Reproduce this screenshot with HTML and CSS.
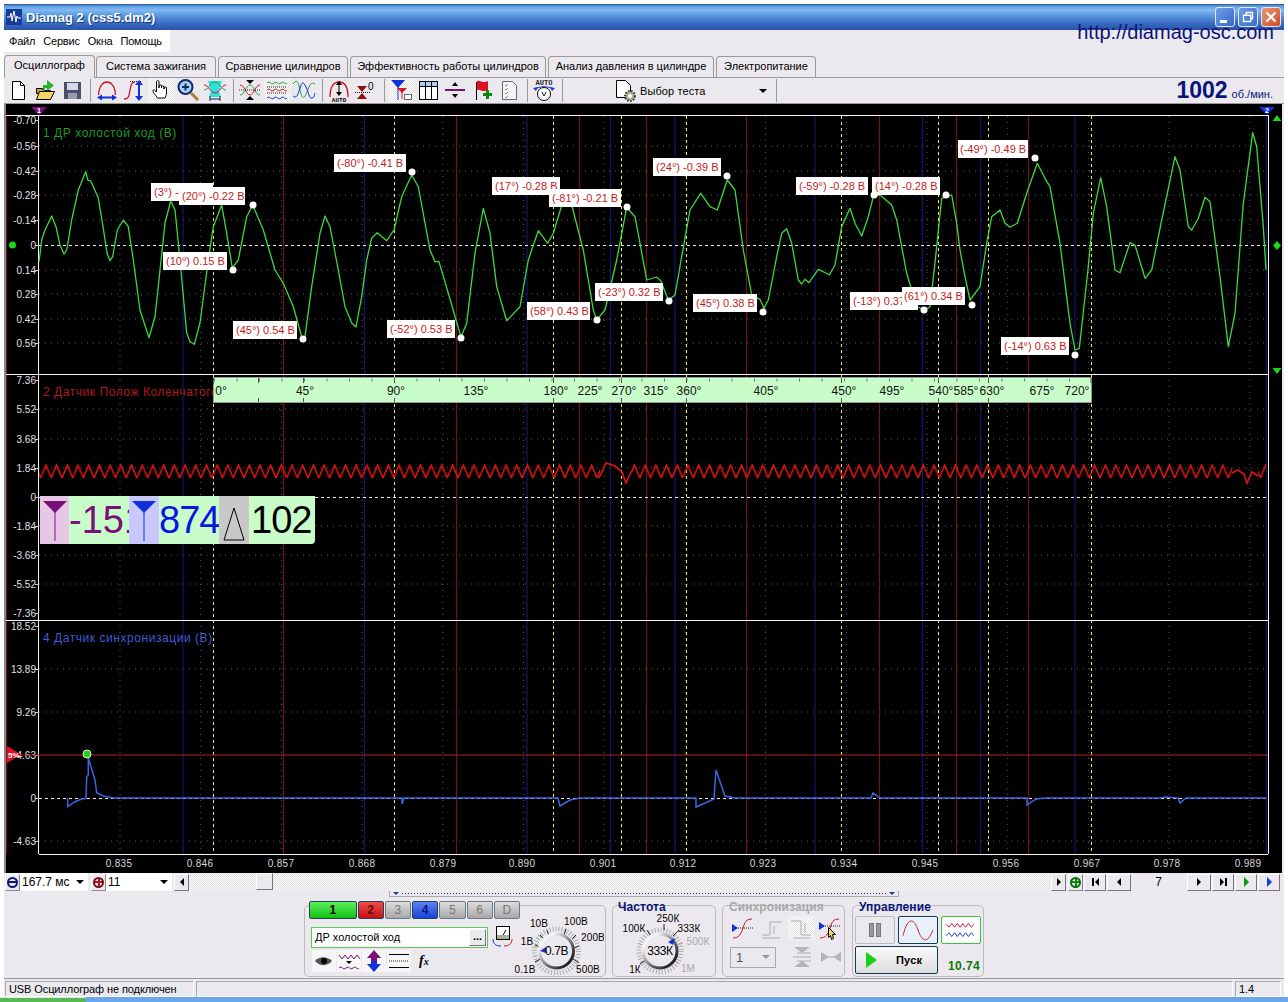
FILE: index.html
```html
<!DOCTYPE html>
<html lang="ru">
<head>
    <meta charset="UTF-8">
    <title>Diamag 2 (css5.dm2)</title>
    <link rel="stylesheet" href="styles.css">
</head>
<body>
<div class="window">
    <div class="titlebar">
        <svg class="app-icon" viewBox="0 0 16 16"><rect width="16" height="16" class="f-navy"/><path class="s-white" d="M1 8h3l1-4 1 8 2-10 2 11 1-6 1 2h3"/></svg>
        <span class="title">Diamag 2 (css5.dm2)</span>
        <div class="win-buttons">
            <span class="win-btn"><i class="win-min"></i></span>
            <span class="win-btn"><svg viewBox="0 0 20 20"><path class="s-white2" d="M5 8h8v7H5zM8 8V5h7v7h-2"/></svg></span>
            <span class="win-btn win-close"><svg viewBox="0 0 20 20"><path class="s-white3" d="M5 5l10 10M15 5L5 15"/></svg></span>
        </div>
    </div>
    <a class="site-link">http://diamag-osc.com</a>

    <div class="menubar">
        <span>Файл</span><span>Сервис</span><span>Окна</span><span>Помощь</span>
    </div>

    <div class="tabs">
        <div class="tab active">Осциллограф</div>
        <div class="tab w120">Система зажигания</div>
        <div class="tab w130">Сравнение цилиндров</div>
        <div class="tab w196">Эффективность работы цилиндров</div>
        <div class="tab w166">Анализ давления в цилиндре</div>
        <div class="tab w100">Электропитание</div>
    </div>

    <div class="toolbar">
        <span class="tb"><svg viewBox="0 0 24 24"><path class="f-white s-black" d="M6.500 3.500h8l4 4v14h-12z"/><path class="s-black" d="M14.500 3.500v4h4"/></svg></span>
        <span class="tb"><svg viewBox="0 0 24 24"><path class="f-tan s-black" d="M3.500 10.500h6l1 2h7v3h-14z"/><path class="f-yellow s-black" d="M3.500 21.500l3-8h15l-4 8z"/><path class="f-green" d="M14 2l7 5.500-7 5.500v-3h-2v3h-2V7h4z"/></svg></span>
        <span class="tb"><svg viewBox="0 0 24 24"><path class="f-slate" d="M4 4h17v17H4z"/><path class="f-pale" d="M7 5h11v7H7z"/><path class="f-grey" d="M8 15h9v6H8z"/></svg></span>
        <span class="tb-sep"></span>
        <span class="tb"><svg viewBox="0 0 24 24"><path class="s-red" d="M3.500 17C4 8 8 4 12 4s8 4 8.500 13"/><path class="s-blue2" d="M5 19.500h14"/><path class="f-blue" d="M2 19.500l5-3v6zM22 19.500l-5-3v6z"/></svg></span>
        <span class="tb"><svg viewBox="0 0 24 24"><path class="s-dots" d="M8 3.500h11"/><path class="s-red" d="M2 21c5 0 5-3 6-9s2-8 5-8"/><path class="s-blue2" d="M17 6v14"/><path class="f-blue" d="M17 2l-4 5h8zM17 23l-4-5h8z"/></svg></span>
        <span class="tb pressed"><svg viewBox="0 0 24 24"><path class="f-white s-black" d="M8.500 20c-2-3-5-6-4.500-7.500s2-.5 3.500 1.500V4c0-2 2.500-2 2.500 0v6-2c0-1.500 2.500-1.500 2.500 0v2-1c0-1.500 2.500-1.500 2.500 0v2-1c0-1.500 2.500-1.500 2.500 0v5c0 2-1 3.500-1.500 5z"/></svg></span>
        <span class="tb"><svg viewBox="0 0 24 24"><path class="s-tan3" d="M15 15l7 7"/><circle class="f-sky s-navy2" cx="9.500" cy="9" r="7"/><path class="s-navy2" d="M6 9h7M9.500 5.500v7"/></svg></span>
        <span class="tb"><svg viewBox="0 0 24 24"><path class="f-cyan" d="M5 3h14l-3 10 2 6H6l2-6z"/><path class="s-red1" d="M1 7c5 0 6 8 11 8s6-8 11-8"/><path class="s-green1" d="M1 12c5 0 6-8 11-8s6 8 11 8"/><path class="s-navy1" d="M7 21h10M7 18v5M17 18v5"/></svg></span>
        <span class="tb-sep"></span>
        <span class="tb"><svg viewBox="0 0 24 24"><path class="s-green1" d="M2 17c5 0 6-10 10-10s5 10 10 10"/><path class="s-red1" d="M2 7c5 0 6 10 10 10s5-10 10-10"/><path class="s-dots" d="M1 12h22"/><path class="f-black" d="M12 6L8 2h8zM12 18l-4 4h8z"/></svg></span>
        <span class="tb pressed"><svg viewBox="0 0 24 24"><path class="s-green1" d="M2 5c3-3 4 3 7 0s4 3 7 0 4 3 6 0"/><path class="s-dots" d="M2 9h20M2 15h20"/><path class="s-red1" d="M2 12c3-3 4 3 7 0s4 3 7 0 4 3 6 0"/><path class="s-blue1" d="M2 20c3-3 4 3 7 0s4 3 7 0 4 3 6 0"/></svg></span>
        <span class="tb"><svg viewBox="0 0 24 24"><path class="s-green1" d="M1 6c4-5 5-3 7 6s4 10 7 2 4-10 8-8"/><path class="s-blue1" d="M1 18c4 3 5-2 7-8s3-7 6-1 3 12 6 11 2-3 3-5"/></svg></span>
        <span class="tb-sep"></span>
        <span class="tb"><svg viewBox="0 0 24 24"><path class="s-red" d="M3 19C3 8 7 4 12 4s9 4 9 15"/><path class="s-black" d="M12 7v9"/><path class="f-black" d="M12 3L9 7h6zM12 18l-3-4h6z"/><text class="t-auto" x="12" y="23.500">AUTO</text></svg></span>
        <span class="tb"><svg viewBox="0 0 24 24"><path class="f-darkred" d="M3 8h10l-5 6zM3 21h10l-5-6z"/><path class="s-dots" d="M1 14.500h15"/><text class="t-zero" x="14" y="12">0</text></svg></span>
        <span class="tb-sep"></span>
        <span class="tb pressed"><svg viewBox="0 0 24 24"><path class="f-blue" d="M2 2h14l-7 8z"/><path class="s-blue1" d="M9 8v14"/><path class="f-red" d="M8 10h10l-5 5z"/><path class="s-red1" d="M13 14v7"/><rect class="f-white s-slate" x="15.500" y="16.500" width="7" height="5"/></svg></span>
        <span class="tb"><svg viewBox="0 0 24 24"><rect class="f-white s-black" x="3.500" y="3.500" width="18" height="18"/><path class="f-sky" d="M4 4h17v4H4z"/><path class="s-black" d="M3.500 8.500h18M9.500 3.500v18M15.500 3.500v18"/></svg></span>
        <span class="tb"><svg viewBox="0 0 24 24"><path class="s-purple" d="M2 12h20"/><path class="f-black" d="M12 4L9 8h6zM12 20l-3-4h6z"/></svg></span>
        <span class="tb"><svg viewBox="0 0 24 24"><path class="s-black" d="M6.500 4v18"/><path class="f-red" d="M7 3c3-1 4 1 6 1s3 0 5-1v9c-2 1-3 1-5 1s-3-2-6-1z"/><path class="f-darkgreen" d="M13 15h3v-3h3v3h3v3h-3v3h-3v-3h-3z"/></svg></span>
        <span class="tb"><svg viewBox="0 0 24 24"><path class="f-offwhite s-slate" d="M5.500 3.500h10l4 4v14h-14z"/><path class="s-check" d="M8 7l1 1 2-2M8 11l1 1 2-2M8 15l1 1 2-2M8 19l1 1 2-2"/></svg></span>
        <span class="tb-sep"></span>
        <span class="tb"><svg viewBox="0 0 24 24"><text class="t-autoclock" x="12" y="7">AUTO</text><path class="s-blue1" d="M3 11c5-3 13-3 18 0"/><path class="f-blue" d="M1 10l5-1-2 4zM23 10l-5-1 2 4z"/><circle class="f-white s-black" cx="12" cy="16" r="6.500"/><path class="s-navy1" d="M10 14l2 4 2-4"/></svg></span>
        <span class="tb-sep"></span>
        <div class="test-select">
            <svg viewBox="0 0 24 24"><path class="f-white s-black" d="M2.500 1.500h9l5 5v12h-14z"/><circle class="gear" cx="16" cy="17" r="5"/><circle class="f-white" cx="16" cy="17" r="2"/></svg>
            <span>Выбор теста</span>
            <i class="caret"></i>
        </div>
        <span class="tb-sep"></span>
        <div class="rpm"><b>1002</b> об./мин.</div>
    </div>

    <div class="scope">
        <svg class="plot" viewBox="6 104 1276 769">
            <!-- grid -->
            <path class="grid" d="M39 146H1268M39 171H1268M39 195H1268M39 220H1268M39 270H1268M39 294H1268M39 319H1268M39 343H1268M39 409H1268M39 439H1268M39 468H1268M39 526H1268M39 555H1268M39 584H1268M39 669H1268M39 712H1268M39 841H1268"/>
            <path class="grid" d="M120 116V854M200.700 116V854M281.400 116V854M362.100 116V854M442.800 116V854M523.500 116V854M604.200 116V854M684.900 116V854M765.600 116V854M846.300 116V854M927 116V854M1007.700 116V854M1088.400 116V854M1169.100 116V854M1249.800 116V854"/>
            <path class="mark-blue" d="M183 116V854M364.500 116V854M527 116V854M610.500 116V854M675 116V854M815 116V854M922.500 116V854M980.500 116V854M1075 116V854M1266.500 116V854"/>
            <path class="mark-red" d="M6.500 116V854M283.500 116V854M456.500 116V854M579.500 116V854M646.500 116V854M746.500 116V854M879.500 116V854M956.500 116V854M1028.500 116V854"/>
            <path class="mark-yellow" d="M213.500 116V854M394.500 116V854M553.500 116V854M621.500 116V854M686.500 116V854M841.500 116V854M938.500 116V854M988.500 116V854M1091.500 116V854"/>
            <path class="zero" d="M39 245.500H1268M39 497.500H1268M39 798.500H1268"/>

            <!-- axes -->
            <path class="axis" d="M6 115.500H1268M6 374.500H1268M6 620.500H1268M39 854.500H1268M38.500 115V854M1268.500 115V854"/>
            <path class="axis-tick" d="M35 120.500h4M35 146.500h4M35 171.500h4M35 195.500h4M35 220.500h4M35 245.500h4M35 270.500h4M35 294.500h4M35 319.500h4M35 343.500h4M35 380.500h4M35 409.500h4M35 439.500h4M35 468.500h4M35 497.500h4M35 526.500h4M35 555.500h4M35 584.500h4M35 613.500h4M35 626.500h4M35 669.500h4M35 712.500h4M35 755.500h4M35 798.500h4M35 841.500h4"/>
            <g class="y-labels">
                <text x="36" y="124">-0.70</text><text x="36" y="150">-0.56</text><text x="36" y="175">-0.42</text><text x="36" y="199">-0.28</text><text x="36" y="224">-0.14</text><text x="36" y="249">0</text><text x="36" y="274">0.14</text><text x="36" y="298">0.28</text><text x="36" y="323">0.42</text><text x="36" y="347">0.56</text>
                <text x="36" y="384">7.36</text><text x="36" y="413">5.52</text><text x="36" y="443">3.68</text><text x="36" y="472">1.84</text><text x="36" y="501">0</text><text x="36" y="530">-1.84</text><text x="36" y="559">-3.68</text><text x="36" y="588">-5.52</text><text x="36" y="617">-7.36</text>
                <text x="36" y="630">18.52</text><text x="36" y="673">13.89</text><text x="36" y="716">9.26</text><text x="36" y="759">4.63</text><text x="36" y="802">0</text><text x="36" y="845">-4.63</text>
            </g>
            <g class="x-labels">
                <text x="119" y="867">0.835</text><text x="200" y="867">0.846</text><text x="281" y="867">0.857</text><text x="362" y="867">0.868</text><text x="443" y="867">0.879</text><text x="522" y="867">0.890</text><text x="603" y="867">0.901</text><text x="683" y="867">0.912</text><text x="763" y="867">0.923</text><text x="844" y="867">0.934</text><text x="925" y="867">0.945</text><text x="1006" y="867">0.956</text><text x="1087" y="867">0.967</text><text x="1167" y="867">0.978</text><text x="1248" y="867">0.989</text>
            </g>

            <!-- channel 1 -->
            <text class="ch-title ch1" x="43" y="137">1 ДР холостой ход (В)</text>
            <path class="wave-green" d="M39 262L41.700 240L45 230L51.700 216L56 226.700L60 245L64 254L66.700 250L71.700 220L78.300 190L85.700 171.700L88 180.700L90.700 180.700L98.300 198L103 226.700L107 253L110 260.700L112.700 256.700L117.300 230L123.300 220L128.300 226.700L133.300 260L140 310L149 337.700L155 316.700L160 270L165 223L170.700 201L175 210L180 260L186.700 333L190 341.700L194.300 344.300L200 323L208.300 260L213.300 226.700L221.700 205L226.700 233.300L232.300 268L238.300 260L246.700 216.700L252.700 205L263.300 230L275 270L283.300 283.300L293.300 306.700L301.700 336.700L305 336.700L311.700 286.700L320 233.300L325 216L330 226.700L338.300 270L345 306.700L351.700 323L356 327L361.700 296.700L366.700 260L371.700 238L377.300 232.700L386.700 240.700L394 230L401.700 196.700L411.700 175L418.300 186.700L430 250L435 261.700L439 261.700L448.300 293.300L461 336.700L466.700 323.300L475 253L483.300 208.300L490 233L496.700 286.700L506.700 320.700L520 306.700L528.300 260L538.300 230.700L547.700 243.300L553.300 233.300L563.300 200L571.700 205L583.300 250L593.300 310L596.700 320L605 310L616.700 260L626.700 207.300L635 216.700L640 243.300L646.700 280L656.700 277L660.700 280.700L668.300 300L675 295L681.700 256.700L690 210L700.700 193.300L710 206.700L717.300 210L727.300 180L735 190L743.300 250L751.700 295L760 299.300L764 308.300L768.300 300L776.700 256.700L781.700 233.300L786.700 228.700L791.700 243.300L798.300 280L801.700 284L805 279.300L809 282.700L818.300 269.300L823.300 271.700L829.300 275L835 265L841.700 226.700L850 208.300L855 223.300L861.700 236L868.300 216.700L873.300 196.700L880 195L891.700 205L896.700 220L906.700 273.300L916.700 306.700L925 310L930 306.700L935 263L941.700 198.300L951.700 195L956.700 223.300L960 250L965 276.700L970 300L980 286.700L986.700 243.300L991.700 216.700L1000 210L1005 223.300L1010 227.300L1017.300 223.300L1026.700 193.300L1037.300 163.300L1045 178.300L1050 186.700L1060 243.300L1070 323.300L1075 350L1079.300 348.300L1088.300 266.700L1093.300 213.300L1100.700 177.700L1106.700 206.700L1115 270L1120 272.700L1130 242.700L1135 245L1145 278.300L1151.700 270L1161.700 220L1175 156.700L1180 170L1188.300 226.700L1191.700 230L1198.300 218.300L1205 197.300L1210 201.700L1220 276.700L1228.300 346.700L1235 313.300L1243.300 203.300L1252.700 132.700L1256.700 146.700L1263.300 226.700L1266 270"/>
            <g class="callouts">
                <rect x="151" y="183" width="62" height="18"/><text x="154" y="196">(3°) -0.28 В</text>
                <rect x="179" y="187" width="66" height="18"/><text x="182" y="200">(20°) -0.22 В</text>
                <rect x="163" y="252" width="64" height="18"/><text x="166" y="265">(10°) 0.15 В</text>
                <rect x="233" y="321" width="64" height="18"/><text x="236" y="334">(45°) 0.54 В</text>
                <rect x="334" y="154" width="72" height="18"/><text x="337" y="167">(-80°) -0.41 В</text>
                <rect x="387" y="320" width="68" height="18"/><text x="390" y="333">(-52°) 0.53 В</text>
                <rect x="492" y="177" width="68" height="18"/><text x="495" y="190">(17°) -0.28 В</text>
                <rect x="549" y="189" width="72" height="18"/><text x="552" y="202">(-81°) -0.21 В</text>
                <rect x="527" y="302" width="63" height="18"/><text x="530" y="315">(58°) 0.43 В</text>
                <rect x="595" y="283" width="68" height="18"/><text x="598" y="296">(-23°) 0.32 В</text>
                <rect x="653" y="158" width="68" height="18"/><text x="656" y="171">(24°) -0.39 В</text>
                <rect x="693" y="294" width="64" height="18"/><text x="696" y="307">(45°) 0.38 В</text>
                <rect x="796" y="177" width="72" height="18"/><text x="799" y="190">(-59°) -0.28 В</text>
                <rect x="872" y="177" width="68" height="18"/><text x="875" y="190">(14°) -0.28 В</text>
                <rect x="850" y="292" width="68" height="18"/><text x="853" y="305">(-13°) 0.37 В</text>
                <rect x="902" y="287" width="63" height="18"/><text x="904" y="300">(61°) 0.34 В</text>
                <rect x="958" y="140" width="70" height="18"/><text x="960" y="153">(-49°) -0.49 В</text>
                <rect x="1001" y="337" width="68" height="18"/><text x="1004" y="350">(-14°) 0.63 В</text>
            </g>
            <g class="dots">
                <circle cx="253" cy="205" r="3.500"/><circle cx="233" cy="270" r="3.500"/><circle cx="303" cy="339" r="3.500"/><circle cx="412" cy="172" r="3.500"/><circle cx="461" cy="338" r="3.500"/><circle cx="627" cy="207" r="3.500"/><circle cx="597" cy="320" r="3.500"/><circle cx="669" cy="301" r="3.500"/><circle cx="727" cy="176" r="3.500"/><circle cx="763" cy="312" r="3.500"/><circle cx="874" cy="195" r="3.500"/><circle cx="946" cy="195" r="3.500"/><circle cx="924" cy="310" r="3.500"/><circle cx="972" cy="305" r="3.500"/><circle cx="1035" cy="158" r="3.500"/><circle cx="1075" cy="355" r="3.500"/>
            </g>

            <!-- channel 2 -->
            <text class="ch-title ch2" x="43" y="396">2 Датчик Полож Коленчатого</text>
            <rect class="ruler" x="213.500" y="377.500" width="878" height="25"/>
            <path class="ruler-minor" d="M214 380H1091"/>
            <path class="ruler-major" d="M213.500 378v6M258.500 378v5M303.500 378v5M258.500 398v4M303.500 398v4M394.500 378v5M394.500 398v4M553.500 378v5M553.500 398v4M621.500 378v5M621.500 398v4M686.500 378v5M686.500 398v4M841.500 378v5M841.500 398v4M938.500 378v5M938.500 398v4M988.500 378v5M988.500 398v4M1091 378v5"/>
            <g class="ruler-labels">
                <text x="221" y="395">0°</text><text x="305" y="395">45°</text><text x="396" y="395">90°</text><text x="476" y="395">135°</text><text x="556" y="395">180°</text><text x="590" y="395">225°</text><text x="624" y="395">270°</text><text x="656" y="395">315°</text><text x="689" y="395">360°</text><text x="766" y="395">405°</text><text x="844" y="395">450°</text><text x="892" y="395">495°</text><text x="941" y="395">540°</text><text x="966" y="395">585°</text><text x="992" y="395">630°</text><text x="1042" y="395">675°</text><text x="1077" y="395">720°</text>
            </g>
            <defs>
                <pattern id="zig" patternUnits="userSpaceOnUse" x="40.600" y="462" width="10.700" height="20">
                    <path class="wave-red" d="M0 16L5.350 3L10.700 16"/>
                </pattern>
                <linearGradient id="ring" x1="0" y1="0" x2="1" y2="1">
                    <stop offset="0.200" stop-color="#f4f4f4"/><stop offset="0.550" stop-color="#777"/><stop offset="0.850" stop-color="#222"/>
                </linearGradient>
            </defs>
            <rect class="zig-band" x="39" y="462" width="561" height="20"/>
            <rect class="zig-band" x="632" y="462" width="600" height="20"/>
            <rect class="zig-band" x="1258" y="462" width="8" height="20"/>
            <path class="wave-red" d="M599 478L606 463L615 466L622 472L626 483L632 470M1232 473L1238 470L1244 474L1247 483L1252 472L1258 476"/>

            <!-- channel 4 -->
            <text class="ch-title ch4" x="43" y="642">4 Датчик синхронизации (В)</text>
            <path class="trigger" d="M6 755H1268"/>
            <path class="wave-blue" d="M67.700 798V806.700L75 801.700L81.700 799L86 798.300L86.700 776.700L88.300 775V758L95 780L96.700 792.700L103.300 796L113.300 798H402V804L404 798H558L560 806L570 800L580 798H696V807L714 799L716 770L725 796L735 798H871L873 793L880 798H1027V805L1036 799L1045 798H1160L1166 797L1178 798L1180 803L1186 798H1266"/>
            <circle class="trig-dot" cx="87" cy="754" r="4"/>
            <path class="f-red" d="M7 746l14 8.500-14 8.500z"/>
            <text class="t-five" x="8" y="757.500">5%</text>

            <!-- cursor and channel markers -->
            <path class="f-purple" d="M31 107h16l-8 8z"/>
            <text class="t-cursor" x="39" y="113">1</text>
            <path class="f-blue" d="M1259 107h16l-8 8z"/>
            <text class="t-cursor" x="1267" y="113">2</text>
            <circle class="f-lime" cx="12.500" cy="245" r="3.500"/>
            <path class="f-lime" d="M1277 115l4.500 6h-9zM1277 241l4 4.500-4 4.500-4-4.500zM1272.500 368h9l-4.500 6z"/>
        </svg>

        <div class="readout">
            <div class="cell cell-purple"><svg viewBox="0 0 30 48"><path class="f-purple" d="M3 5h24L15 17z"/><path class="s-purple1" d="M15 10v35"/></svg></div>
            <div class="value value-purple">-151</div>
            <div class="cell cell-blue"><svg viewBox="0 0 30 48"><path class="f-blue" d="M3 5h24L15 17z"/><path class="s-blue1" d="M15 10v35"/></svg></div>
            <div class="value value-blue">874</div>
            <div class="cell cell-grey"><svg viewBox="0 0 30 48"><path class="s-black" d="M15 12L5 44h20z"/></svg></div>
            <div class="value value-black">102</div>
        </div>
    </div>

    <div class="scrollrow">
        <span class="round"><i class="round-minus"></i></span>
        <div class="combo w68">167.7 мс<i class="caret"></i></div>
        <span class="round gap-l"><i class="round-plus"></i></span>
        <div class="combo w66">11<i class="caret"></i></div>
        <span class="sbtn gap-l2"><i class="tri-left"></i></span>
        <div class="track"><span class="thumb"></span></div>
        <span class="sbtn"><i class="tri-right"></i></span>
        <span class="round gap-l2"><i class="round-green"></i></span>
        <span class="nav gap-l2"><i class="bar-left"></i><i class="tri-left"></i></span>
        <span class="nav nav-w"><i class="tri-left"></i></span>
        <div class="page-no">7</div>
        <span class="nav nav-w"><i class="tri-right"></i></span>
        <span class="nav"><i class="tri-right"></i><i class="bar-right"></i></span>
        <span class="nav"><i class="tri-right tri-green"></i></span>
        <span class="nav"><i class="tri-right tri-blue"></i></span>
    </div>

    <div class="panel">
        <div class="splitter"><i class="tri-down"></i><span class="split-dots"></span><i class="tri-down"></i></div>
        <div class="groups">
            <div class="group g-channel">
                <div class="g-left">
                    <div class="channels">
                        <span class="ch ch-on-green w48">1</span>
                        <span class="ch ch-on-red w26">2</span>
                        <span class="ch ch-off w26">3</span>
                        <span class="ch ch-on-blue w26">4</span>
                        <span class="ch ch-off w26">5</span>
                        <span class="ch ch-off w26">6</span>
                        <span class="ch ch-off w26">D</span>
                    </div>
                    <div class="name-row">
                        <div class="name-input">ДР холостой ход<span class="dots-btn">...</span></div>
                        <svg class="meter" viewBox="0 0 22 22"><rect class="f-white s-black" x="5.500" y="0.500" width="13" height="13"/><path class="s-black" d="M12 9l3-5"/><path class="f-gear" d="M6 9h12v4H6z"/><path class="s-blue1" d="M2 13c0 5 3 7 8 7"/><path class="s-red1" d="M21 13c0 5-3 7-8 7"/></svg>
                    </div>
                    <div class="ch-tools">
                        <span class="ct"><svg viewBox="0 0 24 22"><path class="f-darkgrey" d="M3 11c4-5 12-5 17 0-4 5-12 6-17 0z"/><circle class="f-black" cx="12" cy="11" r="3"/></svg></span>
                        <span class="ct"><svg viewBox="0 0 24 22"><path class="s-purple1" d="M2 5l3 4 3-4 3 4 3-4 3 4 3-4 3 4"/><path class="f-black" d="M9 11h6l-3 3z"/><path class="s-purple1" d="M2 18c3-3 4 3 7 0s4 3 7 0 4 3 6 0"/></svg></span>
                        <span class="ct"><svg viewBox="0 0 24 22"><path class="f-purple" d="M12 0l7 8h-4v3H9V8H5z"/><path class="f-blue" d="M12 22l7-8h-4v-3H9v3H5z"/></svg></span>
                        <span class="ct"><svg viewBox="0 0 24 22"><path class="s-black" d="M2 4.500h20M2 17.500h20"/><path class="s-dots" d="M2 11h20"/></svg></span>
                        <span class="fx"><i>f</i><i class="fx-x">x</i></span>
                    </div>
                </div>
                <svg class="knob knob-v" viewBox="514 908 90 67">
                    <circle class="knob-ticks" cx="556.500" cy="951" r="22"/>
                    <path class="knob-arm" d="M547 930l2 6M540 935l4 4M535 945l5 2M535 962l5-3M576 935l-4 4M566 929l-2 6M579 946l-5 2M579 963l-6-4"/>
                    <circle class="knob-ring" cx="556.500" cy="951" r="17"/>
                    <path class="f-blue" d="M540 951l6-4v6z"/>
                    <text class="knob-value" x="556.500" y="955">0.7В</text>
                    <g class="knob-labels">
                        <text x="539" y="927">10В</text><text x="576" y="925">100В</text><text x="593" y="941">200В</text><text x="527" y="945">1В</text><text x="525" y="973">0.1В</text><text x="588" y="973">500В</text>
                    </g>
                </svg>
            </div>

            <div class="group g-freq">
                <div class="group-title">Частота</div>
                <svg class="knob knob-f" viewBox="613 914 102 62">
                    <circle class="knob-ticks" cx="660" cy="951" r="21"/>
                    <path class="knob-arm" d="M647 930l3 5M664 924v6M678 931l-5 5M640 964l6-4"/>
                    <path class="knob-arm-off" d="M683 943l-5 2M679 963l-5-3"/>
                    <circle class="knob-ring" cx="660" cy="951" r="17"/>
                    <path class="f-blue" d="M675 938l-7 4 5 3z"/>
                    <text class="knob-value" x="660" y="955">333К</text>
                    <g class="knob-labels">
                        <text x="668" y="922">250К</text><text x="634" y="932">100К</text><text x="689" y="932">333К</text><text class="off" x="698" y="945">500К</text><text x="635" y="973">1К</text><text class="off" x="688" y="972">1М</text>
                    </g>
                </svg>
            </div>

            <div class="group g-sync">
                <div class="group-title off">Синхронизация</div>
                <div class="sync-row">
                    <span class="sb"><svg viewBox="0 0 26 24"><path class="s-red1" d="M3 22c6 0 8-4 10-10s3-9 9-9"/><path class="s-dots" d="M6 12h17"/><path class="f-blue" d="M2 8l6 4-6 4z"/></svg></span>
                    <span class="sb"><svg viewBox="0 0 26 24"><path class="s-off" d="M3 19h8V6h12M3 22h18M15 10v8"/></svg></span>
                    <span class="sb sb-on"><svg viewBox="0 0 26 24"><path class="s-off" d="M3 5h10v14h10M5 22h18M17 7v10"/></svg></span>
                    <span class="sb"><svg viewBox="0 0 26 24"><path class="s-red1" d="M3 22c6 0 8-4 10-10s3-9 9-9"/><path class="s-dots" d="M6 10h17"/><path class="f-blue" d="M2 6l6 4-6 4z"/><path class="f-yellow s-black" d="M11.500 11.500l7 7h-3l1 4-2 1-1-4-2 2z"/></svg></span>
                </div>
                <div class="sync-row sync-row2">
                    <div class="sync-select">1<i class="caret caret-off"></i></div>
                    <span class="sb"><svg viewBox="0 0 26 24"><path class="s-off" d="M4 12h18M8 8h14M8 16h14"/><path class="f-offgrey" d="M5 2h16l-8 6zM5 22h16l-8-6z"/></svg></span>
                    <span class="sb"><svg viewBox="0 0 26 24"><path class="f-offgrey" d="M3 7l8 5-8 5zM23 7l-8 5 8 5z"/><path class="s-off" d="M10 12h6"/></svg></span>
                </div>
            </div>

            <div class="group g-control">
                <div class="group-title">Управление</div>
                <div class="ctl-row">
                    <span class="ctl ctl-plain"><i class="pause"></i><i class="pause"></i></span>
                    <span class="ctl ctl-navy"><svg viewBox="0 0 40 28"><path class="s-red1" d="M4 20c5-22 12-18 16-6s10 16 16 0"/></svg></span>
                    <span class="ctl ctl-green"><svg viewBox="0 0 40 28"><path class="s-red1" d="M4 8l3 3 3-4 3 4 3-4 3 4 3-4 3 4 3-4 3 4 3-3"/><path class="s-blue1" d="M4 20l3-3 3 4 3-4 3 4 3-4 3 4 3-4 3 4 3-4 3 3"/></svg></span>
                </div>
                <div class="ctl-row ctl-row2">
                    <span class="start"><i class="start-tri"></i><b>Пуск</b></span>
                    <span class="freq-val">10.74</span>
                </div>
            </div>
        </div>
    </div>

    <div class="statusbar">
        <div class="st st-main">USB Осциллограф не подключен</div>
        <div class="st st-wide"></div>
        <div class="st st-ver">1.4</div>
    </div>
</div>
<div class="taskbar"><span class="start-strip"></span></div>
</body>
</html>
```

FILE: styles.css
```css
* { box-sizing: border-box; }

body {
    margin: 0;
    width: 1288px;
    height: 1002px;
    overflow: hidden;
    background: #fff;
    font-family: "Liberation Sans", Arial, sans-serif;
    font-size: 11px;
    color: #000;
}

.window {
    position: relative;
    width: 1280px;
    margin: 4px 4px 0;
    background: #ece9ee;
}

/* title bar */
.titlebar {
    display: flex;
    align-items: center;
    height: 26px;
    padding-left: 2px;
    background: linear-gradient(#28508f 0, #5c9ae0 2px, #7fbaf2 6px, #5f9be0 11px, #3a6cc4 19px, #2a52a8 26px);
}
.app-icon { width: 16px; height: 16px; margin-right: 4px; }
.title {
    color: #fff;
    font-size: 13px;
    font-weight: bold;
    text-shadow: 1px 1px 0 #123a80;
}
.win-buttons { display: flex; gap: 3px; margin-left: auto; margin-right: 3px; }
.win-btn {
    display: block;
    position: relative;
    width: 20px;
    height: 20px;
    border: 1px solid #dce8f8;
    border-radius: 3px;
    background: linear-gradient(135deg, #6f9ee6, #3a68c8);
}
.win-btn svg { display: block; width: 18px; height: 18px; }
.win-close { background: linear-gradient(135deg, #ee9a78, #cf4a20); }
.win-min { position: absolute; left: 4px; bottom: 3px; width: 7px; height: 3px; background: #fff; }
.site-link {
    position: absolute;
    right: 10px;
    top: 16px;
    color: #0a1478;
    font-size: 20px;
    line-height: 24px;
}

/* menu */
.menubar {
    display: flex;
    gap: 8px;
    align-items: center;
    width: 166px;
    height: 22px;
    padding-left: 5px;
    background: #fff;
    font-size: 11px;
    letter-spacing: -.2px;
}

/* tabs */
.tabs { display: flex; align-items: flex-end; gap: 2px; height: 25px; }
.tab {
    height: 21px;
    border: 1px solid #9a9a9a;
    border-bottom: 0;
    border-radius: 4px 4px 0 0;
    text-align: center;
    line-height: 19px;
    background: #ece9ee;
}
.tab.active { width: 91px; height: 23px; margin-right: -1px; background: #ece9ee; position: relative; top: 1px; }
.w120 { width: 120px; }
.w130 { width: 130px; }
.w196 { width: 196px; }
.w166 { width: 166px; }
.w100 { width: 100px; }

/* toolbar */
.toolbar {
    display: flex;
    align-items: center;
    height: 27px;
    padding-left: 1px;
    border-top: 1px solid #999;
    border-bottom: 1px solid #999;
}
.tb { display: block; width: 27px; height: 25px; padding: 0 1px; }
.tb svg { display: block; width: 24px; height: 24px; }
.tb.pressed { background: repeating-conic-gradient(#fff 0 25%, #e4e4e4 0 50%) 0 0 / 2px 2px; }
.tb-sep { display: block; width: 8px; height: 23px; background: linear-gradient(#999, #999) center / 1px 100% no-repeat; }
.test-select {
    display: flex;
    align-items: center;
    width: 158px;
    margin-left: 48px;
    margin-right: 0;
    letter-spacing: .1px;
}
.test-select svg { width: 24px; height: 24px; margin-right: 2px; }
.test-select .caret { margin-left: auto; margin-right: 5px; }
.rpm { margin-left: auto; padding-right: 11px; color: #0a1478; font-size: 11px; }
.rpm b { font-size: 23px; margin-right: 1px; }

.caret {
    display: inline-block;
    width: 0;
    height: 0;
    border: 4px solid transparent;
    border-top-color: #000;
    border-bottom: 0;
}
.caret-off { border-top-color: #999; }

/* scope */
.scope {
    position: relative;
    width: 1278px;
    height: 769px;
    border-left: 2px solid #888;
    background: #000;
}
.plot { display: block; width: 1276px; height: 769px; }
.plot text { font-family: "Liberation Sans", Arial, sans-serif; }

.grid { stroke: #5c5c5c; stroke-width: 1; stroke-dasharray: 1 5; fill: none; }
.mark-blue { stroke: #14146e; stroke-width: 1.2; fill: none; }
.mark-red { stroke: #701414; stroke-width: 1.2; fill: none; }
.mark-yellow { stroke: #f4f050; stroke-width: 1; stroke-dasharray: 3 3; fill: none; }
.zero { stroke: #eee; stroke-width: 1; stroke-dasharray: 3 3; fill: none; }
.axis { stroke: #f4f4f4; stroke-width: 1; fill: none; }
.axis-tick { stroke: #ccc; stroke-width: 1; fill: none; }
.y-labels text { fill: #e0e0e0; font-size: 10px; text-anchor: end; }
.x-labels text { fill: #d8d8d8; font-size: 10px; text-anchor: middle; letter-spacing: .3px; }
.ch-title { font-size: 12px; letter-spacing: .55px; }
.ch1 { fill: #219a21; }
.ch2 { fill: #b01a1a; }
.ch4 { fill: #3f5cd0; }
.wave-green { stroke: #3ed83e; stroke-width: 1.3; fill: none; stroke-linejoin: round; }
.wave-red { stroke: #e01414; stroke-width: 1.6; fill: none; }
.wave-blue { stroke: #3a66e0; stroke-width: 1.5; fill: none; }
.zig-band { fill: url(#zig); }
.trigger { stroke: #b42020; stroke-width: 1.2; fill: none; }
.trig-dot { fill: #20d020; stroke: #f0f0a0; stroke-width: 1; }
.t-five { fill: #fff; font-size: 8px; font-weight: bold; }
.t-cursor { fill: #fff; font-size: 7px; font-weight: bold; text-anchor: middle; }
.callouts rect { fill: #fff; }
.callouts text { fill: #c41a1a; font-size: 11px; }
.dots circle { fill: #fff; }
.ruler { fill: #c8fcc8; stroke: #999; stroke-width: 1; }
.ruler-minor { stroke: #777; stroke-width: 3; stroke-dasharray: 1 21.500; fill: none; }
.ruler-major { stroke: #555; stroke-width: 1; fill: none; }
.ruler-labels text { fill: #111; font-size: 12px; text-anchor: middle; }

/* cursor readout */
.readout {
    position: absolute;
    left: 34px;
    top: 392px;
    display: flex;
    height: 48px;
    border-radius: 0 0 4px 0;
    overflow: hidden;
}
.cell { width: 30px; height: 48px; }
.cell svg { display: block; width: 30px; height: 48px; }
.cell-purple { width: 29px; background: #e6c8e6; }
.cell-blue { background: #c8c8fc; }
.cell-grey { background: #c8c8c8; }
.value {
    height: 48px;
    width: 60px;
    overflow: hidden;
    background: #c8fcc8;
    font-size: 38px;
    line-height: 48px;
    white-space: nowrap;
    letter-spacing: -1px;
}
.value-purple { color: #7a107a; letter-spacing: 0; }
.value-blue { color: #0a14e0; }
.value-black { color: #000; width: 66px; padding-left: 2px; }

/* scroll row */
.scrollrow { display: flex; align-items: center; height: 18px; padding: 0 4px 0 1px; }
.round {
    display: flex;
    align-items: center;
    justify-content: center;
    width: 15px;
    height: 17px;
    border: 1px solid;
    border-color: #fff #888 #888 #fff;
}
.round i { display: block; width: 11px; height: 11px; border-radius: 50%; border: 2px solid #0a1478; background: linear-gradient(#0a1478, #0a1478) center / 7px 2px no-repeat; }
.round .round-plus { border-color: #701020; background: linear-gradient(#c01020, #c01020) center / 7px 2px no-repeat, linear-gradient(#c01020, #c01020) center / 2px 7px no-repeat; }
.round .round-green { border-color: #0a6a0a; background: linear-gradient(#0a8a0a, #0a8a0a) center / 7px 2px no-repeat, linear-gradient(#0a8a0a, #0a8a0a) center / 2px 7px no-repeat; }
.gap-l { margin-left: 3px; }
.gap-l2 { margin-left: 2px; }
.combo {
    display: flex;
    align-items: center;
    height: 18px;
    padding: 0 4px 0 2px;
    background: #fff;
    font-size: 12px;
}
.combo .caret { margin-left: auto; }
.w68 { width: 68px; }
.w66 { width: 66px; }
.sbtn, .nav {
    display: flex;
    align-items: center;
    justify-content: center;
    width: 15px;
    height: 17px;
    border: 1px solid;
    border-color: #fff #777 #777 #fff;
}
.nav { width: 22px; margin-left: 1px; }
.nav-w { width: 24px; }
.track {
    flex: 1;
    height: 18px;
    background: repeating-conic-gradient(#fff 0 25%, #dedede 0 50%) 0 0 / 2px 2px;
}
.thumb {
    display: block;
    width: 17px;
    height: 17px;
    margin-left: 67px;
    border: 1px solid;
    border-color: #fff #777 #777 #fff;
    background: #ece9ee;
}
.page-no { width: 55px; height: 18px; line-height: 18px; text-align: center; font-size: 12px; background: #ece9ee; }
.tri-left, .tri-right { display: block; width: 0; height: 0; border: 4px solid transparent; }
.tri-left { border-right-color: #000; border-left: 0; }
.tri-right { border-left-color: #000; border-right: 0; }
.tri-green { border-width: 5px; border-right: 0; border-left-color: #0a9a0a; }
.tri-blue { border-width: 5px; border-right: 0; border-left-color: #1440d8; }
.bar-left, .bar-right { display: block; width: 2px; height: 8px; background: #000; }
.bar-left { margin-right: 1px; }
.bar-right { margin-left: 1px; }

/* bottom panel */
.panel { height: 87px; }
.splitter {
    display: flex;
    align-items: center;
    justify-content: space-between;
    width: 510px;
    height: 6px;
    margin-left: 385px;
    padding: 0 3px;
    border: 1px solid #aaa;
    border-top: 0;
}
.split-dots { flex: 1; margin: 0 3px; height: 1px; background: repeating-linear-gradient(90deg, #1a3a8a 0 1px, transparent 1px 3px); }
.tri-down { display: block; width: 0; height: 0; border: 3px solid transparent; border-top-color: #1a3a8a; border-bottom: 0; }
.groups { display: flex; gap: 6px; margin-top: 8px; padding-left: 300px; }
.group {
    position: relative;
    height: 72px;
    border: 1px solid #bcbcbc;
    border-radius: 5px;
}
.group-title {
    width: fit-content;
    margin: -6px 0 0 3px;
    padding: 0 2px;
    color: #0a1478;
    font-size: 12px;
    font-weight: bold;
    letter-spacing: .1px;
    line-height: 14px;
}
.group-title.off { margin-left: -3px; color: #a8a8a8; }

.g-channel { display: flex; width: 302px; padding-left: 4px; }
.g-left { width: 205px; }
.channels { display: flex; gap: 1px; margin-top: -5px; background: #ece9ee; width: 211px; }
.ch {
    display: block;
    height: 18px;
    border: 1px solid #23435e;
    border-radius: 2px;
    text-align: center;
    font-size: 12px;
    font-weight: bold;
    line-height: 16px;
}
.w48 { width: 48px; }
.w26 { width: 26.500px; }
.ch-on-green { background: linear-gradient(#5cf05c, #14c014); }
.ch-on-red { background: linear-gradient(#f04a4a, #c81010); color: #601010; }
.ch-on-blue { background: linear-gradient(#5a82f0, #1a44d8); color: #0a1478; }
.ch-off { background: linear-gradient(#dcdcdc, #a8a8a8); color: #777; font-weight: normal; border-color: #6a7a8a; }
.name-row { display: flex; align-items: center; gap: 3px; width: 209px; margin-top: 7px; margin-left: 2px; }
.name-input {
    display: flex;
    align-items: center;
    justify-content: space-between;
    flex: none;
    width: 177px;
    height: 21px;
    padding-left: 3px;
    border: 1px solid #58c858;
    background: #fff;
}
.dots-btn {
    width: 17px;
    height: 17px;
    margin-right: 1px;
    border: 1px solid;
    border-color: #fff #777 #777 #fff;
    background: #ece9ee;
    text-align: center;
    line-height: 12px;
    font-weight: bold;
}
.meter { width: 22px; height: 22px; flex: none; }
.ch-tools { display: flex; align-items: center; gap: 1px; margin-top: 2px; margin-left: 3px; }
.ct { display: block; width: 24px; height: 22px; background: #f6f6f6; }
.ct svg { display: block; width: 24px; height: 22px; }
.fx { margin-left: 7px; font-family: "Liberation Serif", serif; font-size: 14px; font-weight: bold; }
.fx-x { font-size: 10px; }
.knob { display: block; }
.knob-v { width: 90px; height: 67px; margin-top: 2px; }
.knob-f { width: 102px; height: 62px; }
.knob-ticks { fill: none; stroke: #aaa; stroke-width: 5; stroke-dasharray: 1 2; }
.knob-arm { stroke: #222; stroke-width: 1; fill: none; }
.knob-arm-off { stroke: #aaa; stroke-width: 1; fill: none; }
.knob-ring { fill: #ece9ee; stroke: url(#ring); stroke-width: 3; }
.knob-value { font-size: 12px; text-anchor: middle; letter-spacing: -.4px; }
.knob-labels text { font-size: 10px; text-anchor: middle; letter-spacing: .1px; }
.knob-labels .off { fill: #a8a8a8; }
.knob text { font-family: "Liberation Sans", Arial, sans-serif; }

.g-freq { width: 104px; }
.g-sync { width: 123px; padding-left: 7px; }
.g-control { width: 132px; margin-left: 1px; padding-left: 2px; }
.g-control .group-title { margin-left: 2px; }
.sync-row { display: flex; gap: 3px; margin-top: 2px; }
.sb { display: block; width: 26px; height: 24px; }
.sb svg { display: block; width: 26px; height: 24px; }
.sb-on { background: repeating-conic-gradient(#fff 0 25%, #e4e4e4 0 50%) 0 0 / 2px 2px; }
.sync-row2 { margin-top: 5px; align-items: center; }
.sync-select {
    display: flex;
    align-items: center;
    justify-content: space-between;
    width: 47px;
    height: 21px;
    margin-right: 10px;
    padding: 0 5px;
    border: 1px solid #aaa;
    color: #555;
    font-size: 13px;
}
.ctl-row { display: flex; gap: 3px; margin-top: 2px; }
.ctl-row2 { align-items: center; }
.ctl {
    display: flex;
    align-items: center;
    justify-content: center;
    gap: 2px;
    width: 40px;
    height: 28px;
    border-radius: 2px;
}
.ctl svg { display: block; width: 38px; height: 26px; }
.ctl-plain { border: 1px solid #bbb; }
.ctl-navy { border: 1px solid #123a60; background: #e8f0fa; }
.ctl-green { border: 1px solid #40c040; background: #fff; }
.pause { display: block; width: 5px; height: 14px; background: #999; border: 1px solid #777; }
.start {
    display: flex;
    align-items: center;
    width: 83px;
    height: 28px;
    padding-left: 10px;
    border: 1px solid #123a60;
    border-radius: 2px;
    background: linear-gradient(#fafafa, #dcdcdc);
}
.start-tri { display: block; width: 0; height: 0; border: 8px solid transparent; border-left: 11px solid #18d018; border-right: 0; }
.start b { margin-left: 19px; font-size: 11px; letter-spacing: .2px; }
.freq-val { margin: 11px 0 0 7px; color: #0a7a0a; font-size: 12px; font-weight: bold; letter-spacing: .4px; }

/* status bar */
.statusbar { display: flex; gap: 2px; height: 19px; padding: 2px 0 0 1px; border-top: 1px solid #999; }
.st { height: 16px; border: 1px solid; border-color: #aaa #fff #fff #aaa; line-height: 14px; padding-left: 3px; letter-spacing: -.1px; }
.st-main { width: 189px; }
.st-wide { width: 1037px; }
.st-ver { width: 46px; }

.taskbar { height: 5px; background: #6aa6ea; }
.start-strip { display: block; width: 86px; height: 5px; background: #58b858; border-top: 1px solid #d8f0d8; }

/* icon paints */
.f-white { fill: #fff; }
.f-offwhite { fill: #f4f4f4; }
.f-navy { fill: #1a3a9a; }
.f-tan { fill: #c8a040; }
.f-yellow { fill: #f4d860; }
.f-green { fill: #30b030; }
.f-darkgreen { fill: #0a8a0a; }
.f-lime { fill: #18d818; }
.f-slate { fill: #4a5070; }
.f-pale { fill: #d8d8e8; }
.f-grey { fill: #9a9aa8; }
.f-gear { fill: #a8b098; }
.f-blue { fill: #1030d8; }
.f-sky { fill: #a8d0f0; }
.f-cyan { fill: #30e0e0; }
.f-red { fill: #e01020; }
.f-darkred { fill: #901010; }
.f-black { fill: #000; }
.f-darkgrey { fill: #555; }
.f-purple { fill: #7a107a; }
.f-offgrey { fill: #b4b4b4; }
.gear { fill: #a8b098; stroke: #333; stroke-width: 2; stroke-dasharray: 1.500 1.500; }
.s-white { stroke: #fff; fill: none; stroke-width: 1; }
.s-white2 { stroke: #fff; fill: none; stroke-width: 1.500; }
.s-white3 { stroke: #fff; fill: none; stroke-width: 2.500; }
.s-black { stroke: #000; stroke-width: 1; }
path.s-black:not([class*="f-"]) { fill: none; }
.s-red { stroke: #d01020; fill: none; stroke-width: 1.300; }
.s-red1 { stroke: #d01020; fill: none; stroke-width: 1; }
.s-green1 { stroke: #20a040; fill: none; stroke-width: 1; }
.s-blue1 { stroke: #1030d8; fill: none; stroke-width: 1; }
.s-blue2 { stroke: #1030d8; fill: none; stroke-width: 2; }
.s-navy1 { stroke: #101a50; fill: none; stroke-width: 1; }
.s-navy2 { stroke: #102a70; stroke-width: 2; }
path.s-navy2 { fill: none; }
.s-tan3 { stroke: #a88040; fill: none; stroke-width: 3; }
.s-slate { stroke: #667; stroke-width: 1; }
.s-dots { stroke: #222; fill: none; stroke-width: 1; stroke-dasharray: 1 1; }
.s-purple { stroke: #7a107a; fill: none; stroke-width: 2; }
.s-purple1 { stroke: #7a107a; fill: none; stroke-width: 1; }
.s-check { stroke: #888; fill: none; stroke-width: 1; }
.s-off { stroke: #aaa; fill: none; stroke-width: 1; }
.t-auto, .t-autoclock { font-family: "Liberation Mono", monospace; font-size: 6px; font-weight: bold; text-anchor: middle; }
.t-autoclock { fill: #222; font-size: 7px; }
.t-zero { font-family: "Liberation Sans", sans-serif; font-size: 10px; }
```
